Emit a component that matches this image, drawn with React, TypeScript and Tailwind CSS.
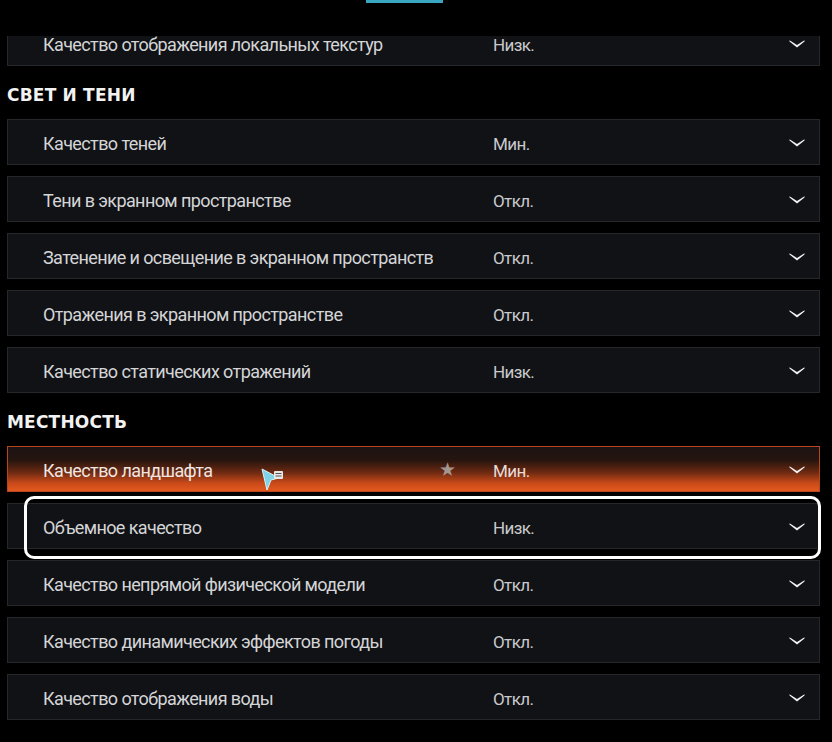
import React from 'react';

type Row = { label: string; value: string; active?: boolean; focused?: boolean };
type Item = { kind: 'row'; row: Row } | { kind: 'header'; title: string };

const items: Item[] = [
  { kind: 'row', row: { label: 'Качество отображения локальных текстур', value: 'Низк.' } },
  { kind: 'header', title: 'СВЕТ И ТЕНИ' },
  { kind: 'row', row: { label: 'Качество теней', value: 'Мин.' } },
  { kind: 'row', row: { label: 'Тени в экранном пространстве', value: 'Откл.' } },
  { kind: 'row', row: { label: 'Затенение и освещение в экранном пространстве', value: 'Откл.' } },
  { kind: 'row', row: { label: 'Отражения в экранном пространстве', value: 'Откл.' } },
  { kind: 'row', row: { label: 'Качество статических отражений', value: 'Низк.' } },
  { kind: 'header', title: 'МЕСТНОСТЬ' },
  { kind: 'row', row: { label: 'Качество ландшафта', value: 'Мин.', active: true } },
  { kind: 'row', row: { label: 'Объемное качество', value: 'Низк.', focused: true } },
  { kind: 'row', row: { label: 'Качество непрямой физической модели', value: 'Откл.' } },
  { kind: 'row', row: { label: 'Качество динамических эффектов погоды', value: 'Откл.' } },
  { kind: 'row', row: { label: 'Качество отображения воды', value: 'Откл.' } },
];

const FONT = "font-['Roboto',sans-serif]";

function Chevron() {
  return (
    <svg width="16" height="9" viewBox="0 0 16 9" className="shrink-0">
      <path d="M0.5 1.2 L8 6 L15.5 1.2 L15.5 2.6 L8 8.4 L0.5 2.6 Z" fill="#f2f2f2" />
    </svg>
  );
}

function Cursor() {
  return (
    <svg width="24" height="26" viewBox="0 0 24 26" className="absolute left-[253px] top-[19px]">
      <path d="M1 3 L18 12 L10 14 L6 24 Z" fill="#7fd3e6" stroke="#d8f2f8" strokeWidth="1" />
      <rect x="13" y="5" width="9" height="8" rx="1" fill="#e8e8e8" />
      <line x1="14.5" y1="7.5" x2="20.5" y2="7.5" stroke="#555" strokeWidth="1" />
      <line x1="14.5" y1="10" x2="20.5" y2="10" stroke="#555" strokeWidth="1" />
    </svg>
  );
}

function SettingRow({ row }: { row: Row }) {
  const base = row.active
    ? 'border-[#b5461f] bg-[linear-gradient(180deg,#1b1313_0%,#26150f_30%,#6e2a12_58%,#c94a1a_82%,#e3581d_100%)]'
    : 'border-[#26272b] bg-[#111216]';
  return (
    <div className="relative">
      <div className={`relative flex h-[46px] items-center border ${base} ${FONT}`}>
        <div className="relative flex h-full w-[485px] shrink-0 items-center">
          <span
            className={`ml-[35px] mt-[3px] w-[390px] overflow-hidden whitespace-nowrap text-[18px] leading-[24px] tracking-[-0.6px] ${
              row.active ? 'text-[#efe6e2]' : 'text-[#d4d5d7]'
            }`}
          >
            {row.label}
          </span>
          {row.active && (
            <>
              <Cursor />
              <span className="absolute left-[431px] text-[19px] leading-none text-[#a3958f]">★</span>
            </>
          )}
        </div>
        <span
          className={`mt-[3px] flex-1 text-[17px] leading-[24px] tracking-[-0.6px] ${
            row.active ? 'text-[#e8dcd6]' : 'text-[#c9cacc]'
          }`}
        >
          {row.value}
        </span>
        <div className="pr-[14px]">
          <Chevron />
        </div>
      </div>
      {row.focused && (
        <div className="pointer-events-none absolute -top-[7px] -bottom-[10px] left-[17px] -right-[1px] rounded-[10px] border-[3px] border-white" />
      )}
    </div>
  );
}

export default function App() {
  return (
    <div className="relative h-[742px] w-[832px] overflow-hidden bg-black">
      <div className="relative h-[36px]">
        <div className="absolute left-[366px] top-0 h-[3px] w-[77px] bg-[#3aa7c2]" />
      </div>
      <div className="h-[706px] overflow-hidden">
        <div className="-mt-[16px] flex flex-col gap-[11px] pl-[7px] pr-[12px]">
          {items.map((it, i) =>
            it.kind === 'header' ? (
              <div
                key={i}
                className="flex h-[31px] items-center pt-[6px] font-['DejaVu_Sans',sans-serif] text-[17px] font-bold tracking-[0.2px] text-[#f2f2f2]"
              >
                {it.title}
              </div>
            ) : (
              <SettingRow key={i} row={it.row} />
            )
          )}
        </div>
      </div>
    </div>
  );
}
